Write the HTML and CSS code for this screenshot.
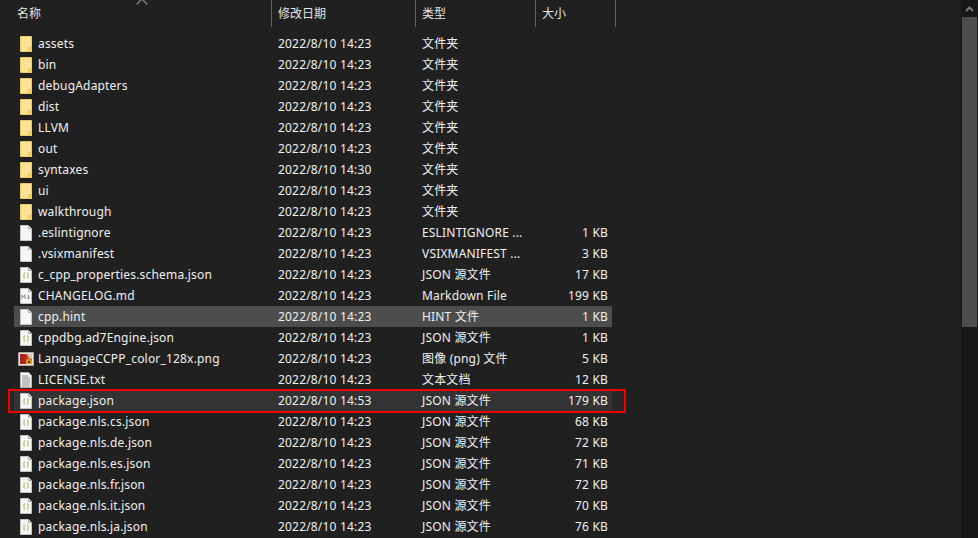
FILE: index.html
```html
<!DOCTYPE html>
<html lang="zh-CN">
<head>
  <meta charset="UTF-8">
  <title>vscode extension folder</title>
  <link rel="stylesheet" href="styles.css">
</head>
<body>

  <svg class="icon-defs" width="0" height="0">
    <symbol id="folder" viewBox="0 0 12 16">
      <path d="M.5.5h11v15H.5z" fill="#ffe394" stroke="#ecc860"/>
      <path d="M8.500 15.500v-4h3v4z" fill="#f6cf63" stroke="#ecc860"/>
    </symbol>
    <symbol id="file" viewBox="0 0 12 16">
      <path d="M.5.5h8l3 3v12H.5z" fill="#f6f6f6" stroke="#c4c4c4"/>
      <path d="M8.500.5v3h3" fill="#d8d8d8" stroke="#a8a8a8"/>
    </symbol>
    <symbol id="json" viewBox="0 0 12 16">
      <path d="M.5.5h8l3 3v12H.5z" fill="#f6f6f6" stroke="#c4c4c4"/>
      <path d="M8.500.5v3h3" fill="#d8d8d8" stroke="#a8a8a8"/>
      <path d="M5 6H4v5h1M7 6h1v5H7" fill="none" stroke="#b5b35a"/>
    </symbol>
    <symbol id="markdown" viewBox="0 0 12 16">
      <path d="M.5.5h8l3 3v12H.5z" fill="#f6f6f6" stroke="#c4c4c4"/>
      <path d="M8.500.5v3h3" fill="#d8d8d8" stroke="#a8a8a8"/>
      <path d="M2 11V7l1.500 2L5 7v4M8.500 7v4M7 9.500l1.500 1.500L10 9.500" fill="none" stroke="#8a8a8a"/>
    </symbol>
    <symbol id="text" viewBox="0 0 12 16">
      <path d="M.5.5h8l3 3v12H.5z" fill="#f6f6f6" stroke="#b4b4b4"/>
      <path d="M2 4h6M2 6h8M2 8h8M2 10h8M2 12h8M2 14h8" stroke="#8c8c8c"/>
    </symbol>
    <symbol id="image" viewBox="0 0 16 14">
      <path d="M.5.5h15v13H.5z" fill="#e8e4dc" stroke="#a8a8a8"/>
      <path d="M2 2h12v10H2z" fill="#c9402c"/>
      <path d="M2 2h4l3 3-2 2 2 5H2z" fill="#a8261c"/>
      <path d="M9 2h5v5l-3-1z" fill="#d9c6b0"/>
      <path d="M8 9l3-3 3 3v3H8z" fill="#e8a012"/>
      <path d="M10 9h2v2h-2z" fill="#3a2a10"/>
    </symbol>
  </svg>

  <div class="explorer">
    <div class="file-pane">
      <div class="column-head">
        <div class="head-cell head-name">名称<span class="sort-arrow"></span></div>
        <div class="head-cell">修改日期</div>
        <div class="head-cell">类型</div>
        <div class="head-cell">大小</div>
      </div>

      <div class="file-list">
        <div class="file-row"><span class="file-name"><svg class="ico"><use href="#folder"/></svg>assets</span><span>2022/8/10 14:23</span><span>文件夹</span><span class="file-size"></span></div>
        <div class="file-row"><span class="file-name"><svg class="ico"><use href="#folder"/></svg>bin</span><span>2022/8/10 14:23</span><span>文件夹</span><span class="file-size"></span></div>
        <div class="file-row"><span class="file-name"><svg class="ico"><use href="#folder"/></svg>debugAdapters</span><span>2022/8/10 14:23</span><span>文件夹</span><span class="file-size"></span></div>
        <div class="file-row"><span class="file-name"><svg class="ico"><use href="#folder"/></svg>dist</span><span>2022/8/10 14:23</span><span>文件夹</span><span class="file-size"></span></div>
        <div class="file-row"><span class="file-name"><svg class="ico"><use href="#folder"/></svg>LLVM</span><span>2022/8/10 14:23</span><span>文件夹</span><span class="file-size"></span></div>
        <div class="file-row"><span class="file-name"><svg class="ico"><use href="#folder"/></svg>out</span><span>2022/8/10 14:23</span><span>文件夹</span><span class="file-size"></span></div>
        <div class="file-row"><span class="file-name"><svg class="ico"><use href="#folder"/></svg>syntaxes</span><span>2022/8/10 14:30</span><span>文件夹</span><span class="file-size"></span></div>
        <div class="file-row"><span class="file-name"><svg class="ico"><use href="#folder"/></svg>ui</span><span>2022/8/10 14:23</span><span>文件夹</span><span class="file-size"></span></div>
        <div class="file-row"><span class="file-name"><svg class="ico"><use href="#folder"/></svg>walkthrough</span><span>2022/8/10 14:23</span><span>文件夹</span><span class="file-size"></span></div>
        <div class="file-row"><span class="file-name"><svg class="ico"><use href="#file"/></svg>.eslintignore</span><span>2022/8/10 14:23</span><span>ESLINTIGNORE ...</span><span class="file-size">1 KB</span></div>
        <div class="file-row"><span class="file-name"><svg class="ico"><use href="#file"/></svg>.vsixmanifest</span><span>2022/8/10 14:23</span><span>VSIXMANIFEST ...</span><span class="file-size">3 KB</span></div>
        <div class="file-row"><span class="file-name"><svg class="ico"><use href="#json"/></svg>c_cpp_properties.schema.json</span><span>2022/8/10 14:23</span><span>JSON 源文件</span><span class="file-size">17 KB</span></div>
        <div class="file-row"><span class="file-name"><svg class="ico"><use href="#markdown"/></svg>CHANGELOG.md</span><span>2022/8/10 14:23</span><span>Markdown File</span><span class="file-size">199 KB</span></div>
        <div class="file-row is-hover"><span class="file-name"><svg class="ico"><use href="#file"/></svg>cpp.hint</span><span>2022/8/10 14:23</span><span>HINT 文件</span><span class="file-size">1 KB</span></div>
        <div class="file-row"><span class="file-name"><svg class="ico"><use href="#json"/></svg>cppdbg.ad7Engine.json</span><span>2022/8/10 14:23</span><span>JSON 源文件</span><span class="file-size">1 KB</span></div>
        <div class="file-row"><span class="file-name"><svg class="ico-wide"><use href="#image"/></svg>LanguageCCPP_color_128x.png</span><span>2022/8/10 14:23</span><span>图像 (png) 文件</span><span class="file-size">5 KB</span></div>
        <div class="file-row"><span class="file-name"><svg class="ico"><use href="#text"/></svg>LICENSE.txt</span><span>2022/8/10 14:23</span><span>文本文档</span><span class="file-size">12 KB</span></div>
        <div class="file-row is-selected"><span class="file-name"><svg class="ico"><use href="#json"/></svg>package.json</span><span>2022/8/10 14:53</span><span>JSON 源文件</span><span class="file-size">179 KB</span></div>
        <div class="file-row"><span class="file-name"><svg class="ico"><use href="#json"/></svg>package.nls.cs.json</span><span>2022/8/10 14:23</span><span>JSON 源文件</span><span class="file-size">68 KB</span></div>
        <div class="file-row"><span class="file-name"><svg class="ico"><use href="#json"/></svg>package.nls.de.json</span><span>2022/8/10 14:23</span><span>JSON 源文件</span><span class="file-size">72 KB</span></div>
        <div class="file-row"><span class="file-name"><svg class="ico"><use href="#json"/></svg>package.nls.es.json</span><span>2022/8/10 14:23</span><span>JSON 源文件</span><span class="file-size">71 KB</span></div>
        <div class="file-row"><span class="file-name"><svg class="ico"><use href="#json"/></svg>package.nls.fr.json</span><span>2022/8/10 14:23</span><span>JSON 源文件</span><span class="file-size">72 KB</span></div>
        <div class="file-row"><span class="file-name"><svg class="ico"><use href="#json"/></svg>package.nls.it.json</span><span>2022/8/10 14:23</span><span>JSON 源文件</span><span class="file-size">70 KB</span></div>
        <div class="file-row"><span class="file-name"><svg class="ico"><use href="#json"/></svg>package.nls.ja.json</span><span>2022/8/10 14:23</span><span>JSON 源文件</span><span class="file-size">76 KB</span></div>
      </div>
    </div>

    <div class="scrollbar">
      <div class="scroll-up"><svg width="9" height="6" viewBox="0 0 9 6"><path d="M1 5l3.500-3.500L8 5" fill="none" stroke="#7a7a7a" stroke-width="2"/></svg></div>
      <div class="scroll-thumb"></div>
    </div>
  </div>

</body>
</html>
```

FILE: styles.css
```css
html, body {
  height: 100%;
}

body {
  margin: 0;
  background-color: #202020;
  color: #f0f0f0;
  font-family: "Noto Sans", "Noto Sans CJK SC", sans-serif;
  font-size: 12px;
  letter-spacing: 0.18px;
  overflow: hidden;
}

.icon-defs {
  display: block;
  height: 0;
}

.explorer {
  display: flex;
  height: 538px;
}

.file-pane {
  flex: 1;
  overflow: hidden;
}

.scrollbar {
  width: 17px;
  background-color: #171717;
  display: flex;
  flex-direction: column;
}

.scroll-up {
  height: 17px;
  display: flex;
  align-items: center;
  justify-content: center;
}

.scroll-thumb {
  height: 310px;
  margin: 0 1px;
  background-color: #4d4d4d;
}

.column-head {
  display: grid;
  grid-template-columns: 272px 144px 120px 80px;
  height: 27px;
  margin-bottom: 6px;
}

.head-cell {
  padding-left: 6px;
  border-right: 1px solid #636363;
  line-height: 27px;
  color: #e4e4e4;
  letter-spacing: 0;
}

.head-name {
  position: relative;
  padding-left: 17px;
}

.sort-arrow {
  position: absolute;
  top: 0;
  left: 138px;
  width: 7px;
  height: 7px;
  border-left: 1px solid #a0a0a0;
  border-top: 1px solid #a0a0a0;
  transform: rotate(45deg);
}

.file-list {
  margin-left: 14px;
  width: 598px;
}

.file-row {
  display: grid;
  grid-template-columns: 264px 144px 114px 72px;
  align-items: center;
  height: 21px;
  line-height: 21px;
  white-space: nowrap;
}

.file-row.is-hover {
  background-color: #4d4d4d;
}

.file-row.is-selected {
  position: relative;
  background-color: #333333;
  box-shadow: 12px 0 0 #272727, -6px 0 0 #272727;
}

.file-row.is-selected::after {
  content: "";
  position: absolute;
  top: -1px;
  bottom: -2px;
  left: -6px;
  right: -14px;
  border: 2px solid #f00000;
}

.file-name {
  display: flex;
  align-items: center;
  padding-left: 6px;
}

.ico {
  width: 12px;
  height: 16px;
  margin-right: 6px;
  flex: none;
}

.ico-wide {
  width: 16px;
  height: 14px;
  margin-left: -2px;
  margin-right: 4px;
  flex: none;
}

.file-size {
  text-align: right;
}
```
